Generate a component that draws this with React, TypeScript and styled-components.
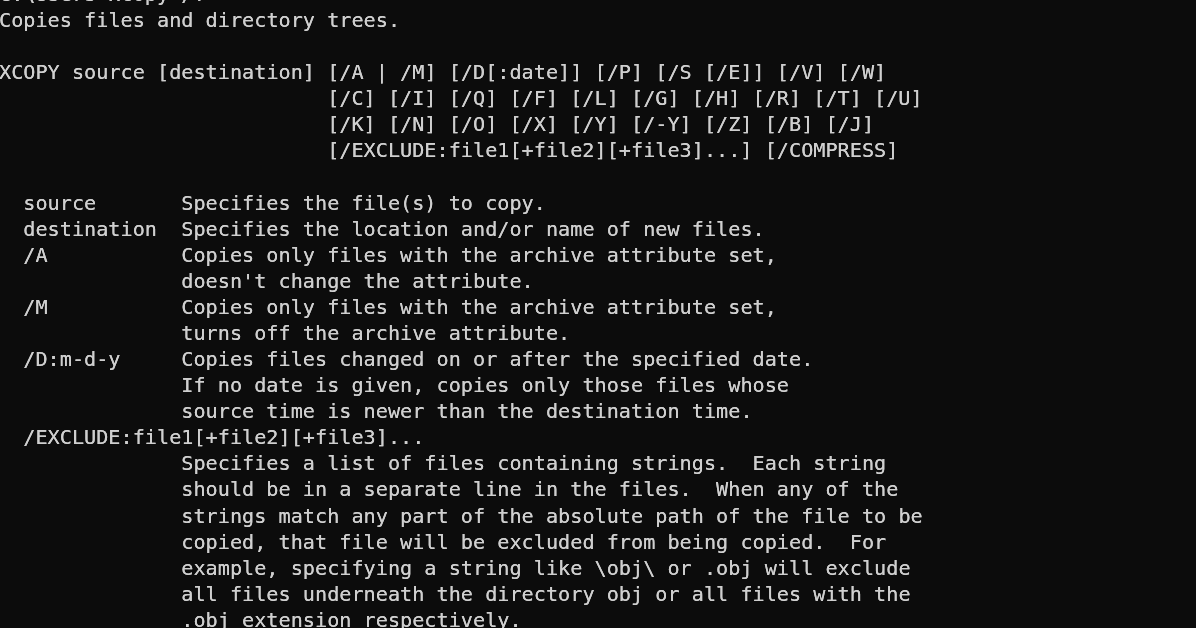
import React from "react";
import styled, { createGlobalStyle } from "styled-components";

const Global = createGlobalStyle`
  html, body {
    margin: 0;
    padding: 0;
    background: #0c0c0c;
    overflow: hidden;
  }
`;

const Screen = styled.main`
  width: 1196px;
  height: 628px;
  overflow: hidden;
  background: #0c0c0c;
`;

const Output = styled.div`
  display: flex;
  flex-direction: column;
  margin: -19px 0 0 -1px;
  font-family: "DejaVu Sans Mono", "Liberation Mono", monospace;
  font-size: 20.2px;
  line-height: 26px;
  color: #cfcfcf;
  text-shadow: 0 0 0.6px #cfcfcf;
  filter: blur(0.4px);
`;

const Line = styled.div<{ $indent?: number }>`
  white-space: pre;
  height: 26.08px;
  padding-left: ${(p) => (p.$indent ?? 0)}ch;
`;

const OptionRow = styled.div`
  display: grid;
  grid-template-columns: 2ch 13ch 1fr;
  white-space: pre;
`;

const Cell = styled.span<{ $col: number }>`
  grid-column: ${(p) => p.$col};
  height: 26.08px;
`;

type Opt = { name: string; lines: string[] };

const header = [
  "C:\\Users>xcopy /?",
  "Copies files and directory trees.",
  "",
  "XCOPY source [destination] [/A | /M] [/D[:date]] [/P] [/S [/E]] [/V] [/W]",
];

const syntaxCont = [
  "[/C] [/I] [/Q] [/F] [/L] [/G] [/H] [/R] [/T] [/U]",
  "[/K] [/N] [/O] [/X] [/Y] [/-Y] [/Z] [/B] [/J]",
  "[/EXCLUDE:file1[+file2][+file3]...] [/COMPRESS]",
];

const options: Opt[] = [
  { name: "source", lines: ["Specifies the file(s) to copy."] },
  { name: "destination", lines: ["Specifies the location and/or name of new files."] },
  {
    name: "/A",
    lines: ["Copies only files with the archive attribute set,", "doesn't change the attribute."],
  },
  {
    name: "/M",
    lines: ["Copies only files with the archive attribute set,", "turns off the archive attribute."],
  },
  {
    name: "/D:m-d-y",
    lines: [
      "Copies files changed on or after the specified date.",
      "If no date is given, copies only those files whose",
      "source time is newer than the destination time.",
    ],
  },
];

const excludeDesc = [
  "Specifies a list of files containing strings.  Each string",
  "should be in a separate line in the files.  When any of the",
  "strings match any part of the absolute path of the file to be",
  "copied, that file will be excluded from being copied.  For",
  "example, specifying a string like \\obj\\ or .obj will exclude",
  "all files underneath the directory obj or all files with the",
  ".obj extension respectively.",
];

export default function App() {
  return (
    <Screen>
      <Global />
      <Output>
        {header.map((t, i) => (
          <Line key={"h" + i}>{t}</Line>
        ))}
        {syntaxCont.map((t, i) => (
          <Line key={"s" + i} $indent={27}>
            {t}
          </Line>
        ))}
        <Line />
        {options.map((o) => (
          <OptionRow key={o.name}>
            <Cell $col={2}>{o.name}</Cell>
            <Cell $col={3}>{o.lines[0]}</Cell>
            {o.lines.slice(1).map((l, i) => (
              <Cell key={i} $col={3}>
                {l}
              </Cell>
            ))}
          </OptionRow>
        ))}
        <Line $indent={2}>/EXCLUDE:file1[+file2][+file3]...</Line>
        {excludeDesc.map((t, i) => (
          <Line key={"e" + i} $indent={15}>
            {t}
          </Line>
        ))}
      </Output>
    </Screen>
  );
}
